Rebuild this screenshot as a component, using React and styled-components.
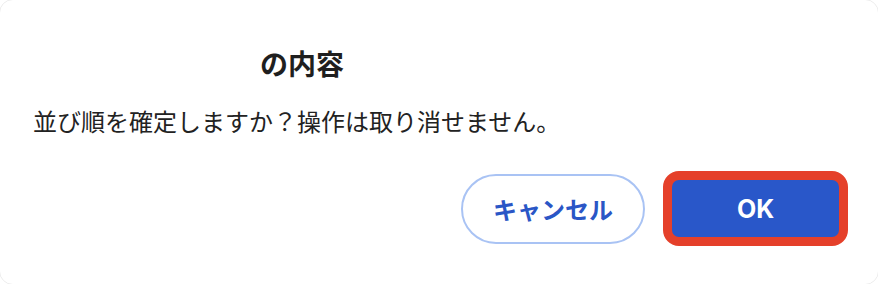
import React from 'react';
import styled, { createGlobalStyle } from 'styled-components';

const GlobalStyle = createGlobalStyle`
  html, body {
    margin: 0;
    padding: 0;
    background: #ffffff;
  }
  body {
    font-family: "Noto Sans CJK JP", "Noto Sans", sans-serif;
    color: #222222;
  }
`

function App() {
    return (
        <>
            <GlobalStyle />
            <Dialog role="dialog">
                <Title>の内容</Title>
                <Message>並び順を確定しますか？操作は取り消せません。</Message>
                <ButtonRow>
                    <CancelButton type="button">キャンセル</CancelButton>
                    <OkButton type="button">OK</OkButton>
                </ButtonRow>
            </Dialog>
        </>
    )
}

const Dialog = styled.div`
    box-sizing: border-box;
    width: 880px;
    height: 286px;
    margin: -1px;
    background: #ffffff;
    border: 1px solid #ececec;
    border-radius: 14px;
    display: flex;
    flex-direction: column;
    padding: 46px 30px 0 33px;
`
const Title = styled.h2`
    margin: 0;
    padding-left: 227px;
    font-size: 28px;
    font-weight: 700;
    line-height: 34px;
    color: #1f1f1f;
`
const Message = styled.p`
    margin: 24px 0 0 0;
    font-size: 24px;
    font-weight: 400;
    line-height: 34px;
    color: #222222;
`
const ButtonRow = styled.div`
    display: flex;
    justify-content: flex-end;
    align-items: center;
    gap: 18px;
    margin-top: 33px;
`
const CancelButton = styled.button`
    box-sizing: border-box;
    width: 184px;
    height: 70px;
    border: 2px solid #a9c3f4;
    border-radius: 35px;
    background: #ffffff;
    color: #2a56c6;
    font-family: "Noto Sans CJK JP", sans-serif;
    font-size: 24px;
    font-weight: 700;
    cursor: pointer;
`
const OkButton = styled.button`
    box-sizing: border-box;
    width: 185px;
    height: 75px;
    border: 9px solid #e5402a;
    border-radius: 16px;
    background: #2957c9;
    color: #ffffff;
    font-family: "Inter", "Noto Sans CJK JP", sans-serif;
    font-size: 25px;
    font-weight: 700;
    cursor: pointer;
`

export default App;
